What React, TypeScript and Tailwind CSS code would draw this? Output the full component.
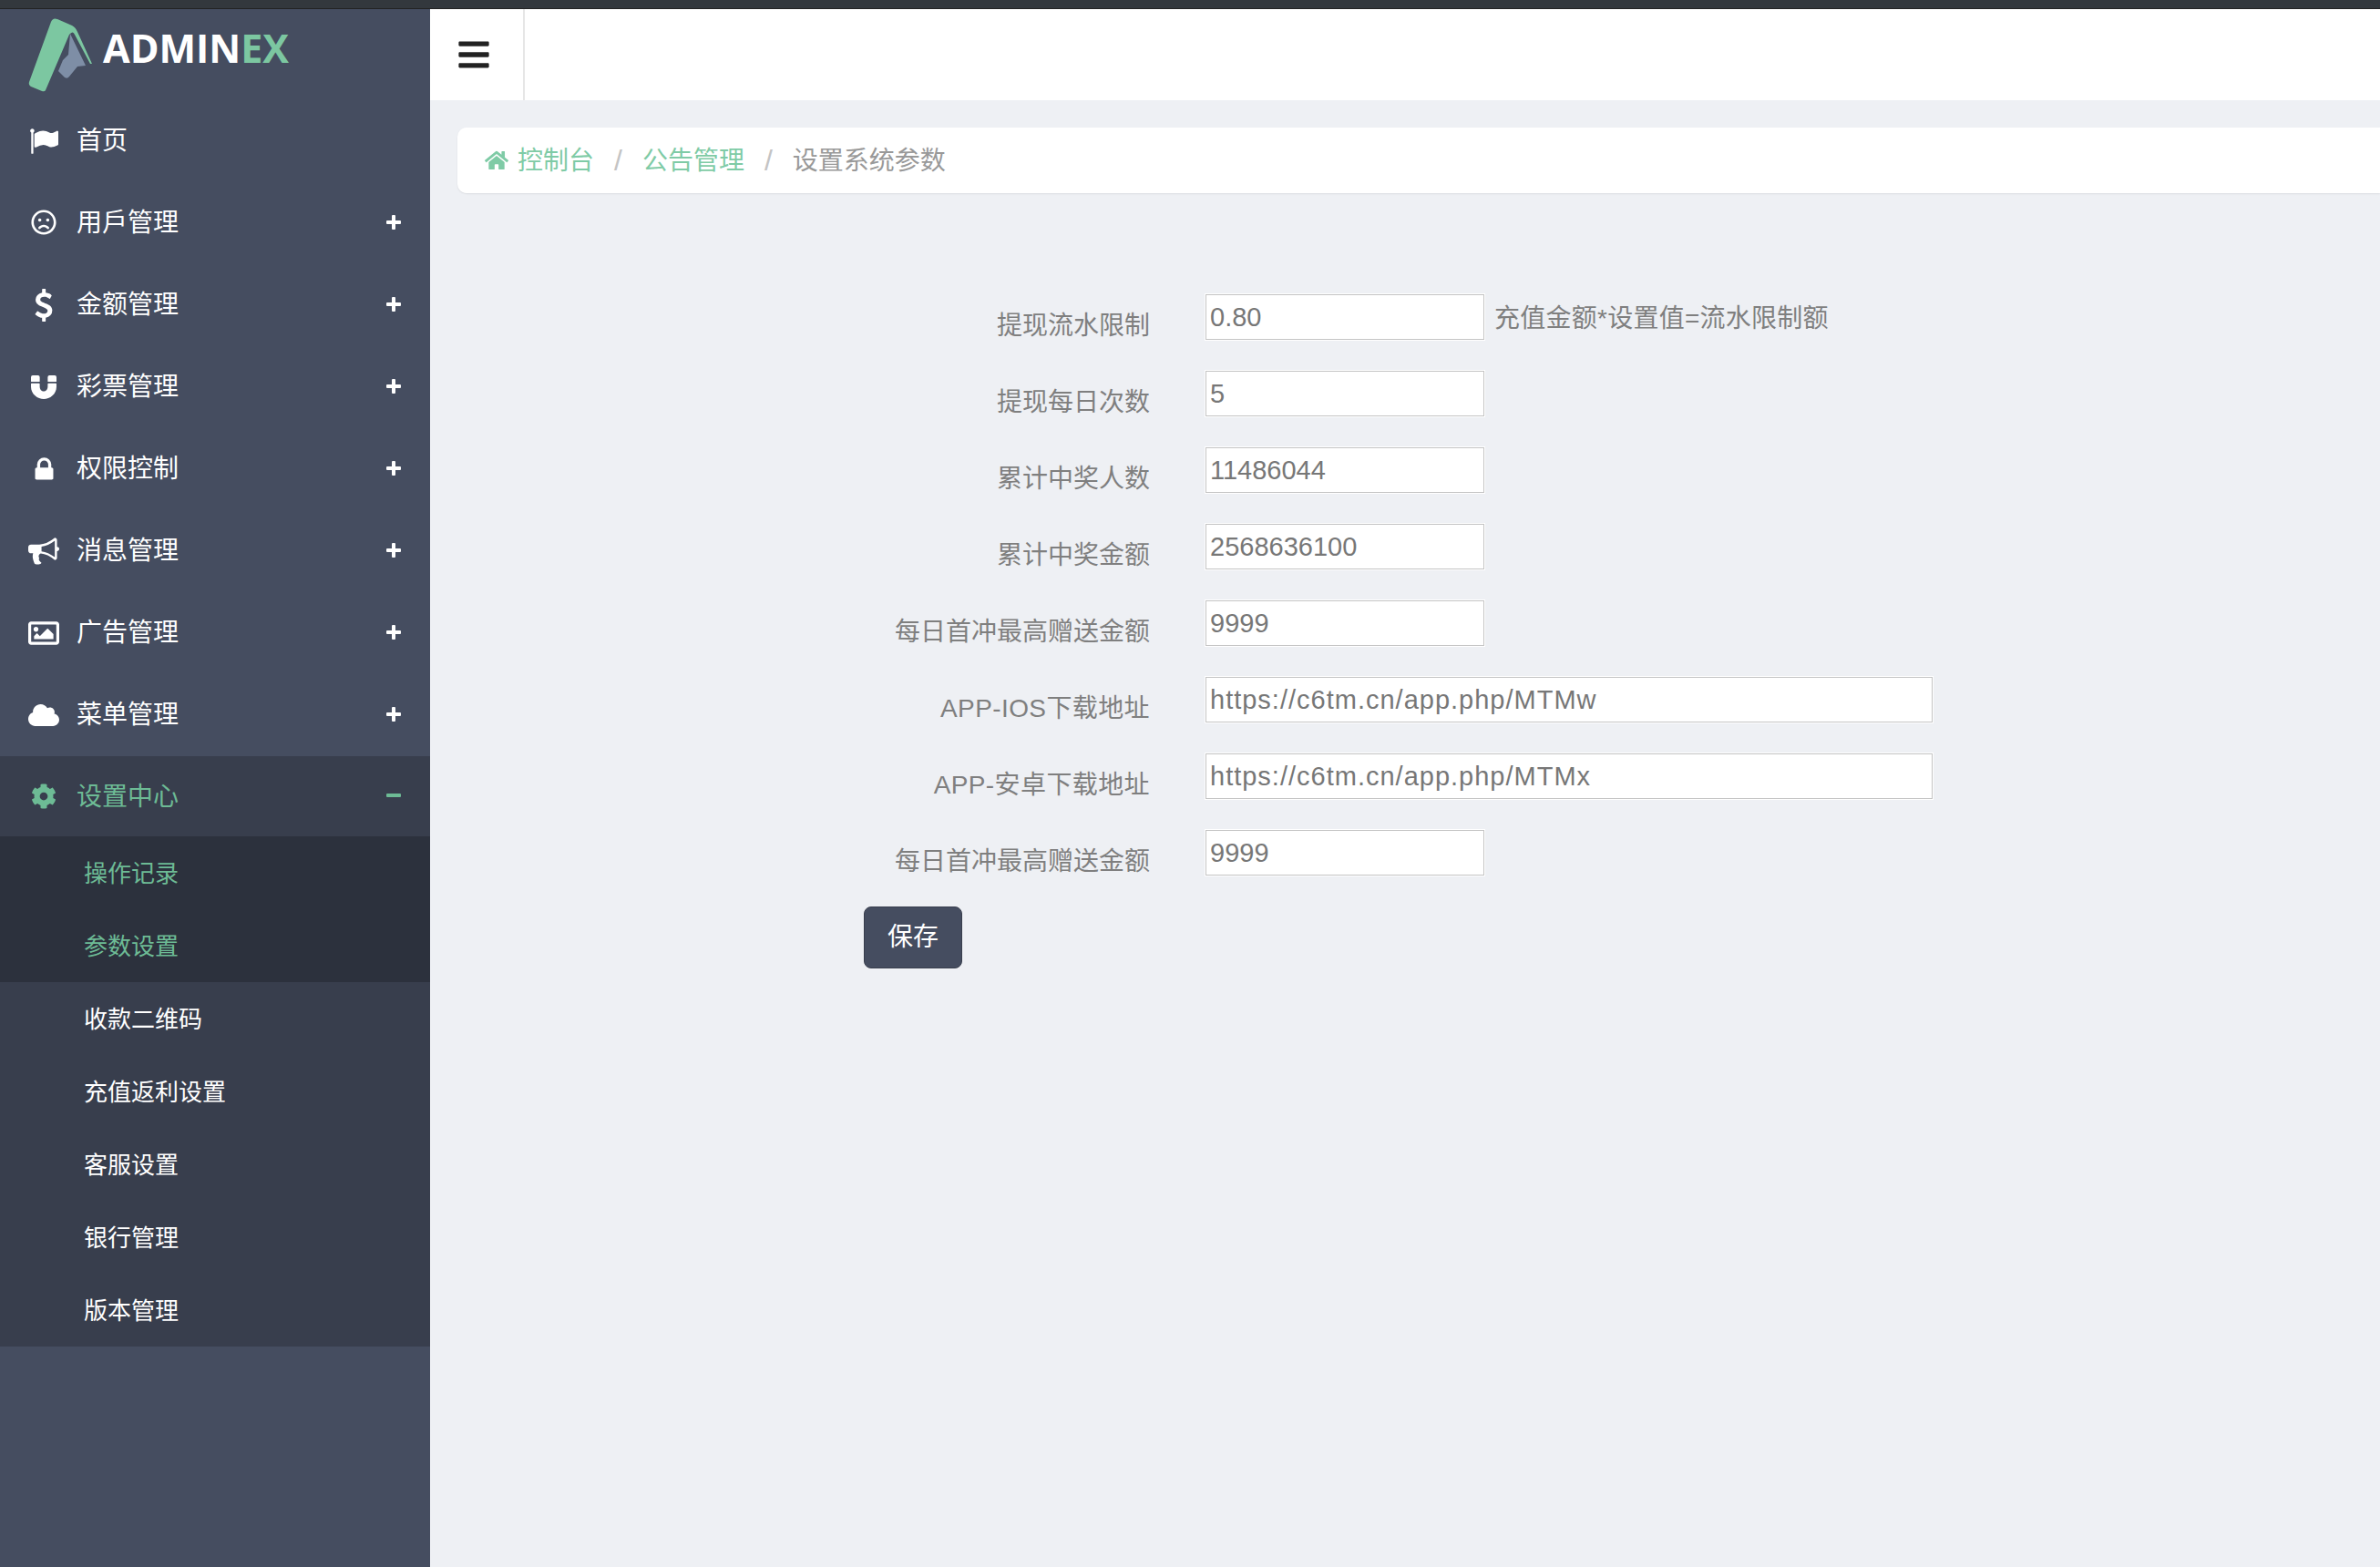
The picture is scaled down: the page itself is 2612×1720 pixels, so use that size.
import { FaBars, FaCloud, FaCog, FaHome, FaMagnet, FaRegFrown, FaRegImage } from 'react-icons/fa';

const font = { fontFamily: '"Liberation Sans", "Noto Sans CJK SC", sans-serif' };

// font-awesome 4 glyphs, the package only ships the newer ones
function Fa4({ d, className }: { d: string; className: string }) {
  return (
    <svg viewBox="0 0 1792 1792" fill="currentColor" className={className}>
      <path d={d} />
    </svg>
  );
}

const flagPath =
  'M320 256q0 72-64 110v1266q0 13-9.5 22.5t-22.5 9.5h-64q-13 0-22.5-9.5t-9.5-22.5v-1266q-64-38-64-110 0-53 37.5-90.5t90.5-37.5 90.5 37.5 37.5 90.5zm1472 64v763q0 25-12.5 38.5t-39.5 27.5q-215 116-369 116-61 0-123.5-22t-108.5-48-115.5-48-142.5-22q-192 0-464 146-17 9-33 9-26 0-45-19t-19-45v-742q0-32 31-55 21-14 79-43 236-120 421-120 107 0 200 29t219 88q38 19 88 19 54 0 117.5-21t110-47 88-47 54.5-21q26 0 45 19t19 45z';
const usdPath =
  'M1362 1185q0 153-99.5 263.5t-258.5 136.5v175q0 14-9 23t-23 9h-135q-13 0-22.5-9.5t-9.5-22.5v-175q-66-9-127.5-31t-101.5-44.5-74-48-46.5-37.5-17.5-18q-17-21-2-41l103-135q7-10 23-12 15-2 24 9l2 2q113 99 243 125 37 8 74 8 81 0 142.5-43t61.5-122q0-28-15-53t-33.5-42-58.5-37.5-66-32-80-32.5q-39-16-61.5-25t-61.5-26.5-62.5-31-56.5-35.5-53.5-42.5-43.5-49-35.5-58-21-66.5-8.5-78q0-138 98-242t255-134v-180q0-13 9.5-22.5t22.5-9.5h135q14 0 23 9t9 23v176q57 6 110.5 23t87 33.5 63.5 37.5 39 29 15 14q17 18 5 38l-81 146q-8 15-23 16-14 3-27-7-3-3-14.5-12t-39-26.5-58.5-32-74.5-26-85.5-11.5q-95 0-155 43t-60 111q0 26 8.5 48t29.5 41.5 39.5 33 56 31 60.5 27 70 27.5q53 20 81 31.5t76 35 75.5 42.5 62 50 53 63.5 31.5 76.5 13 94z';
const lockPath =
  'M640 768h512v-192q0-106-75-181t-181-75-181 75-75 181v192zm832 96v576q0 40-28 68t-68 28h-960q-40 0-68-28t-28-68v-576q0-40 28-68t68-28h32v-192q0-184 132-316t316-132 316 132 132 316v192h32q40 0 68 28t28 68z';
const bullhornPath =
  'M1664 640q53 0 90.5 37.5t37.5 90.5-37.5 90.5-90.5 37.5v384q0 52-38 90t-90 38q-417-347-812-380-58 19-91 66t-31 100.5 40 92.5q-20 33-23 65.5t6 58 33.5 55 48 50 61.5 47.5q-29 58-111.5 83t-168.5 11.5-132-55.5q-7-23-29.5-87.5t-32-94.5-23-89-15-101 3.5-98.5 22-110.5h-122q-66 0-113-47t-47-113v-192q0-66 47-113t113-47h480q435 0 896-384 52 0 90 38t38 90v384zm-128 604v-954q-394 302-768 343v270q377 42 768 341z';

const menu = [
  { label: '用戶管理', icon: <FaRegFrown className="mb-[2px] size-[28px] shrink-0" /> },
  { label: '金额管理', icon: <Fa4 d={usdPath} className="size-[36px] shrink-0" /> },
  { label: '彩票管理', icon: <FaMagnet className="size-[28px] shrink-0" /> },
  { label: '权限控制', icon: <Fa4 d={lockPath} className="size-[31px] shrink-0" /> },
  { label: '消息管理', icon: <Fa4 d={bullhornPath} className="size-[34px] shrink-0" /> },
  { label: '广告管理', icon: <FaRegImage className="size-[34px] shrink-0" /> },
  { label: '菜单管理', icon: <FaCloud className="size-[34px] shrink-0" /> },
];

const subMenu = [
  { label: '操作记录', active: true },
  { label: '参数设置', active: true },
  { label: '收款二维码', active: false },
  { label: '充值返利设置', active: false },
  { label: '客服设置', active: false },
  { label: '银行管理', active: false },
  { label: '版本管理', active: false },
];

const fields = [
  { label: '提现流水限制', value: '0.80', wide: false, note: '充值金额*设置值=流水限制额' },
  { label: '提现每日次数', value: '5', wide: false },
  { label: '累计中奖人数', value: '11486044', wide: false },
  { label: '累计中奖金额', value: '2568636100', wide: false },
  { label: '每日首冲最高赠送金额', value: '9999', wide: false },
  { label: 'APP-IOS下载地址', value: 'https://c6tm.cn/app.php/MTMw', wide: true },
  { label: 'APP-安卓下载地址', value: 'https://c6tm.cn/app.php/MTMx', wide: true },
  { label: '每日首冲最高赠送金额', value: '9999', wide: false },
];

function PlusMinus({ open }: { open?: boolean }) {
  return (
    <svg viewBox="0 0 16 16" fill="currentColor" className="mb-[2px] size-[16px]">
      <rect x="0" y="6" width="16" height="4" rx="1" />
      {!open && <rect x="6" y="0" width="4" height="16" rx="1" />}
    </svg>
  );
}

function Logo() {
  return (
    <div className="flex h-[100px] items-start">
      <svg viewBox="0 0 80 90" className="ml-[30px] mt-[8px] h-[90px] w-[80px] shrink-0">
        <path
          d="M2 72 L26 6 Q28 1 33 3 L49 10 Q53 12 55 17 L71 52 L69 52 L52 20 Q50 15 46 20 L20 81 Q19 83 16 82 L4 77 Q1 75 2 72 Z"
          fill="#7cc7a1"
        />
        <path d="M47 19 L64 54 L55 55 L46 66 Q44 69 41 67 L34 60 L39 48 L45 42 Z" fill="#7e8ea6" />
      </svg>
      <div
        className="ml-[3px] mt-[13px] text-[43px] leading-[60px] font-bold text-white"
        style={{ fontFamily: '"Open Sans", sans-serif' }}
      >
        ADMIN<span className="text-[#7cc7a1]">EX</span>
      </div>
    </div>
  );
}

function Sidebar() {
  return (
    <aside className="w-[472px] shrink-0 bg-[#454d60] text-[28px] text-white">
      <Logo />
      <div className="flex h-[90px] items-center pl-[32px]">
        <span className="flex w-[32px] justify-center">
          <Fa4 d={flagPath} className="size-[32px] shrink-0" />
        </span>
        <span className="ml-[20px]">首页</span>
      </div>
      {menu.map((item) => (
        <div key={item.label} className="flex h-[90px] items-center pl-[32px] pr-[32px]">
          <span className="flex w-[32px] justify-center">{item.icon}</span>
          <span className="ml-[20px] flex-1">{item.label}</span>
          <PlusMinus />
        </div>
      ))}
      <div className="flex h-[88px] items-center bg-[#383e4d] pl-[32px] pr-[32px] text-[#6dbb95]">
        <span className="flex w-[32px] justify-center">
          <FaCog className="size-[28px] shrink-0" />
        </span>
        <span className="ml-[20px] flex-1 pt-[2px]">设置中心</span>
        <PlusMinus open />
      </div>
      <div className="bg-[#383e4d] text-[26px]">
        {subMenu.map((item) => (
          <div
            key={item.label}
            className={`flex h-[80px] items-center pl-[92px] pt-[2px] ${item.active ? 'bg-[#2c313d] text-[#6dbb95]' : ''}`}
          >
            {item.label}
          </div>
        ))}
      </div>
    </aside>
  );
}

function Field({ label, value, wide, note }: { label: string; value: string; wide: boolean; note?: string }) {
  return (
    <div className="mb-[34px] flex h-[50px] items-start">
      <label className={`w-[314px] pt-[11px] text-right leading-[48px] text-[#7f7f7f] ${wide ? 'tracking-[0.4px]' : ''}`}>
        {label}
      </label>
      <input
        readOnly
        value={value}
        className={`ml-[61px] h-[50px] border border-[#c4c4c4] bg-white px-[4px] text-[29px] text-[#777] shadow-[0_0_0_1px_#fff] outline-none ${wide ? 'w-[798px] tracking-[1px]' : 'w-[306px]'}`}
      />
      {note && <span className="ml-[11px] pt-[2px] leading-[50px] tracking-[0.25px] text-[#7f7f7f]">{note}</span>}
    </div>
  );
}

export default function App() {
  return (
    <div className="flex min-h-screen flex-col bg-[#eef0f4] text-[28px]" style={font}>
      <div className="h-[10px] border-b border-[#222] bg-[#33383d]" />
      <div className="flex h-[1710px]">
        <Sidebar />
        <main className="flex-1">
          <header className="flex h-[100px] bg-white">
            <div className="flex w-[104px] items-center justify-center border-r-2 border-[#e6e6e6] pr-[6px] text-[#222]">
              <FaBars className="size-[38px]" />
            </div>
          </header>
          <nav className="ml-[30px] mt-[30px] flex h-[72px] items-center rounded-l-[10px] bg-white pl-[30px] shadow-[0_1px_2px_rgba(0,0,0,0.08)]">
            <FaHome className="size-[26px] text-[#7fcba6]" />
            <span className="ml-[10px] pt-[2px] text-[#7fcba6]">控制台</span>
            <span className="mx-[22px] text-[32px] text-[#c4c4c4]">/</span>
            <span className="pt-[2px] text-[#7fcba6]">公告管理</span>
            <span className="mx-[22px] text-[32px] text-[#c4c4c4]">/</span>
            <span className="pt-[2px] text-[#999]">设置系统参数</span>
          </nav>
          <form className="ml-[476px] mt-[111px]">
            {fields.map((f, i) => (
              <Field key={i} {...f} />
            ))}
            <button
              type="button"
              className="h-[68px] w-[108px] rounded-[8px] border border-[#383e4d] bg-[#454d60] text-white"
            >
              保存
            </button>
          </form>
        </main>
      </div>
    </div>
  );
}
